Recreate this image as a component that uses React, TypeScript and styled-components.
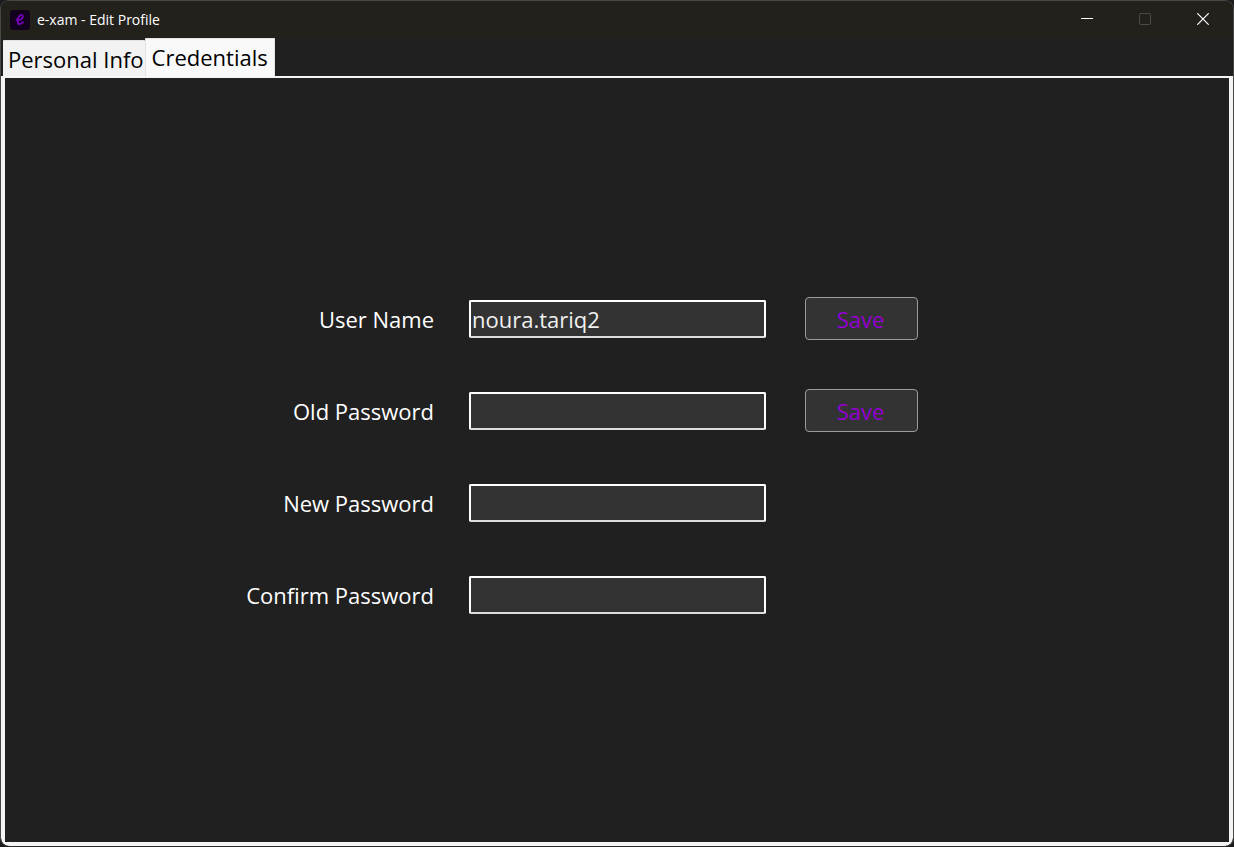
import React, { useState } from "react";
import styled, { createGlobalStyle } from "styled-components";

const GlobalStyle = createGlobalStyle`
  * { box-sizing: border-box; }
  body {
    margin: 0;
    background: #1c1c1c;
    font-family: "Open Sans", "Noto Sans", sans-serif;
  }
`;

const Window = styled.main`
  display: flex;
  flex-direction: column;
  min-height: 100vh;
  overflow: hidden;
  background: #202020;
  border: 1px solid #474745;
  border-bottom-color: #2a2a2a;
  border-radius: 9px;
`;

const TitleBar = styled.header`
  display: flex;
  align-items: center;
  height: 37px;
  padding: 0 1px 0 9px;
  background: #23211c;
`;

const Title = styled.h1`
  flex: 1;
  margin: 0 0 0 7px;
  color: #fff;
  font-size: 14px;
  line-height: 20px;
  font-weight: 400;
`;

const WindowButton = styled.button`
  display: flex;
  align-items: center;
  align-self: flex-start;
  justify-content: center;
  width: 58px;
  height: 36px;
  padding: 0;
  border: 0;
  background: transparent;
  color: #fff;

  &:disabled { color: #4d4b47; }
`;

const TabList = styled.div`
  display: flex;
  align-items: flex-end;
  height: 38px;
  padding-left: 2px;
`;

const Tab = styled.button<{ $active: boolean }>`
  height: ${(p) => (p.$active ? 38 : 36)}px;
  padding: ${(p) => (p.$active ? "0 6px 2px" : "0 1px 0 5px")};
  border: 1px solid #e3e3e3;
  border-bottom: 0;
  border-left-width: ${(p) => (p.$active ? 1 : 0)}px;
  border-right-width: ${(p) => (p.$active ? 1 : 0)}px;
  border-radius: 1px 1px 0 0;
  background: ${(p) => (p.$active ? "#f9f9f9" : "#f2f2f2")};
  color: #000;
  font: 400 22px/30px "Open Sans", "Noto Sans", sans-serif;
  white-space: nowrap;
`;

const PanelFrame = styled.div`
  display: flex;
  flex: 1;
  padding: 2px 4px 4px;
  border-radius: 0 0 8px 8px;
  background: #f5f5f5;
`;

const Panel = styled.section`
  display: flex;
  flex: 1;
  flex-direction: column;
  align-items: center;
  justify-content: center;
  padding: 0 70px 7px 0;
  background: #202020;
`;

const Form = styled.form`
  display: flex;
  flex-direction: column;
  gap: 49px;
`;

const Row = styled.div`
  display: grid;
  grid-template-columns: 188px 297px 117px;
  column-gap: 35px;
  align-items: center;
  height: 43px;
`;

const Label = styled.label`
  color: #fff;
  font-size: 22px;
  line-height: 30px;
  text-align: right;
  white-space: nowrap;
`;

const Input = styled.input`
  width: 100%;
  height: 38px;
  padding: 0 1px;
  border: 2px solid #fff;
  border-bottom-color: #dcdcdc;
  border-radius: 2px;
  outline: 0;
  background: #333;
  color: #f0f0f0;
  font: 400 22px/30px "Open Sans", "Noto Sans", sans-serif;
`;

const SaveButton = styled.button`
  height: 43px;
  margin-left: 4px;
  padding: 0 2px 0 0;
  border: 1px solid #9b9b9b;
  border-radius: 4px;
  background: #333;
  color: #9400d3;
  font: 400 22px/30px "Open Sans", "Noto Sans", sans-serif;
`;

const fields = [
  { id: "username", label: "User Name", type: "text", value: "noura.tariq2", save: true },
  { id: "old-password", label: "Old Password", type: "password", value: "", save: true },
  { id: "new-password", label: "New Password", type: "password", value: "", save: false },
  { id: "confirm-password", label: "Confirm Password", type: "password", value: "", save: false },
];

const tabs = ["Personal Info", "Credentials"];

function AppIcon() {
  return (
    <svg width="20" height="20" viewBox="0 0 20 20" aria-hidden="true">
      <rect width="20" height="20" rx="3" fill="#13001c" />
      <path
        d="M5.8 9.2L7.6 10.2C10.6 10.4 12.9 8.4 12.9 6.6C12.9 4.8 10.6 4.8 9.2 6.4C7.2 8.8 6.9 14.2 9.6 14.2C11.2 14.2 12 13.4 13.4 11.6"
        fill="none"
        stroke="#7600bd"
        strokeWidth="1.8"
      />
    </svg>
  );
}

export default function App() {
  const [active, setActive] = useState("Credentials");

  return (
    <>
      <GlobalStyle />
      <Window>
        <TitleBar>
          <AppIcon />
          <Title>e-xam - Edit Profile</Title>
          <WindowButton type="button" aria-label="Minimize">
            <svg width="12" height="12" aria-hidden="true">
              <path d="M0 5.5H12" stroke="currentColor" />
            </svg>
          </WindowButton>
          <WindowButton type="button" aria-label="Maximize" disabled>
            <svg width="12" height="12" aria-hidden="true">
              <rect x=".5" y=".5" width="11" height="11" rx="1" fill="none" stroke="currentColor" />
            </svg>
          </WindowButton>
          <WindowButton type="button" aria-label="Close">
            <svg width="12" height="12" aria-hidden="true">
              <path d="M.3 .3L11.7 11.7M11.7 .3L.3 11.7" stroke="currentColor" strokeWidth="1.2" />
            </svg>
          </WindowButton>
        </TitleBar>
        <TabList role="tablist">
          {tabs.map((name) => (
            <Tab
              key={name}
              type="button"
              role="tab"
              aria-selected={active === name}
              $active={active === name}
              onClick={() => setActive(name)}
            >
              {name}
            </Tab>
          ))}
        </TabList>
        <PanelFrame>
          <Panel role="tabpanel">
            <Form onSubmit={(e) => e.preventDefault()}>
              {fields.map((f) => (
                <Row key={f.id}>
                  <Label htmlFor={f.id}>{f.label}</Label>
                  <Input id={f.id} type={f.type} defaultValue={f.value} spellCheck={false} />
                  {f.save && <SaveButton type="submit">Save</SaveButton>}
                </Row>
              ))}
            </Form>
          </Panel>
        </PanelFrame>
      </Window>
    </>
  );
}
